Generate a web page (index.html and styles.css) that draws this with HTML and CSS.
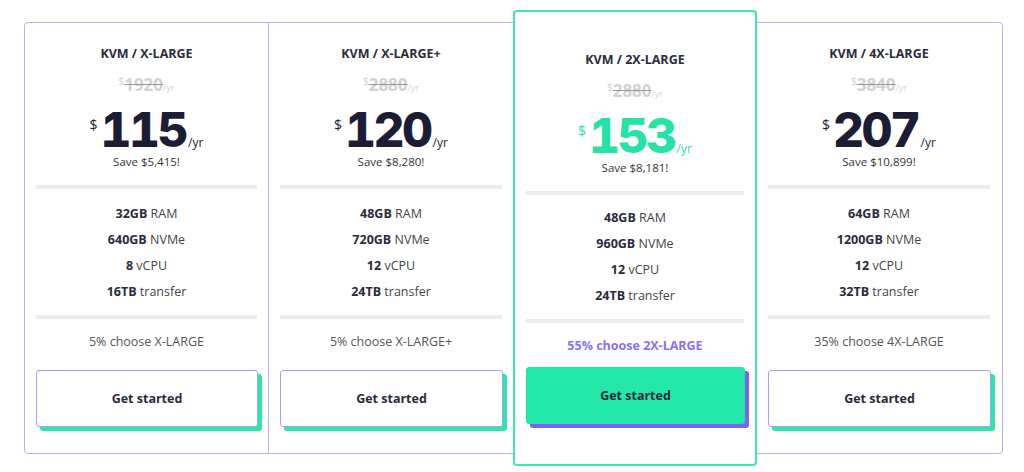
FILE: index.html
```html
<!DOCTYPE html>
<html lang="en">
<head>
  <meta charset="UTF-8">
  <title>KVM plans</title>
  <link rel="stylesheet" href="styles.css">
</head>
<body>

<div class="plans">
  <div class="plan plan-first">
    <h3 class="plan-name">KVM / X-LARGE</h3>
    <div class="old-price"><sup>$</sup><s>1920</s><span>/yr</span></div>
    <div class="price"><sup>$</sup><span class="amount">115</span><span class="per">/yr</span></div>
    <p class="save">Save $5,415!</p>
    <div class="rule"></div>
    <ul class="specs">
      <li><b>32GB</b> RAM</li>
      <li><b>640GB</b> NVMe</li>
      <li><b>8</b> vCPU</li>
      <li><b>16TB</b> transfer</li>
    </ul>
    <div class="rule"></div>
    <p class="choose">5% choose X-LARGE</p>
    <a class="btn" href="#">Get started</a>
  </div>

  <div class="plan">
    <h3 class="plan-name">KVM / X-LARGE+</h3>
    <div class="old-price"><sup>$</sup><s>2880</s><span>/yr</span></div>
    <div class="price"><sup>$</sup><span class="amount">120</span><span class="per">/yr</span></div>
    <p class="save">Save $8,280!</p>
    <div class="rule"></div>
    <ul class="specs">
      <li><b>48GB</b> RAM</li>
      <li><b>720GB</b> NVMe</li>
      <li><b>12</b> vCPU</li>
      <li><b>24TB</b> transfer</li>
    </ul>
    <div class="rule"></div>
    <p class="choose">5% choose X-LARGE+</p>
    <a class="btn" href="#">Get started</a>
  </div>

  <div class="plan plan-featured">
    <h3 class="plan-name">KVM / 2X-LARGE</h3>
    <div class="old-price"><sup>$</sup><s>2880</s><span>/yr</span></div>
    <div class="price"><sup>$</sup><span class="amount">153</span><span class="per">/yr</span></div>
    <p class="save">Save $8,181!</p>
    <div class="rule"></div>
    <ul class="specs">
      <li><b>48GB</b> RAM</li>
      <li><b>960GB</b> NVMe</li>
      <li><b>12</b> vCPU</li>
      <li><b>24TB</b> transfer</li>
    </ul>
    <div class="rule"></div>
    <p class="choose">55% choose 2X-LARGE</p>
    <a class="btn" href="#">Get started</a>
  </div>

  <div class="plan">
    <h3 class="plan-name">KVM / 4X-LARGE</h3>
    <div class="old-price"><sup>$</sup><s>3840</s><span>/yr</span></div>
    <div class="price"><sup>$</sup><span class="amount">207</span><span class="per">/yr</span></div>
    <p class="save">Save $10,899!</p>
    <div class="rule"></div>
    <ul class="specs">
      <li><b>64GB</b> RAM</li>
      <li><b>1200GB</b> NVMe</li>
      <li><b>12</b> vCPU</li>
      <li><b>32TB</b> transfer</li>
    </ul>
    <div class="rule"></div>
    <p class="choose">35% choose 4X-LARGE</p>
    <a class="btn" href="#">Get started</a>
  </div>
</div>

</body>
</html>
```

FILE: styles.css
```css
* {
  box-sizing: border-box;
  margin: 0;
  padding: 0;
}
html, body {
  min-height: 472px;
}
body {
  background: #fff;
  font-family: "Open Sans", "Liberation Sans", sans-serif;
  color: #333;
  padding-top: 22px;
}
.plans {
  display: flex;
  align-items: flex-start;
  width: 979px;
  height: 432px;
  margin-left: 24px;
  border: 1px solid #b9adf7;
  border-radius: 4px;
}
.plan {
  width: 244px;
  height: 430px;
  display: flex;
  flex-direction: column;
  align-items: stretch;
  padding: 22px 0 0;
  text-align: center;
}
.plan-first {
  border-right: 1px solid #b9adf7;
}
.plan-name {
  font-size: 12.5px;
  line-height: 18px;
  font-weight: 700;
  color: #2b2b3c;
}
.old-price {
  margin-top: 8px;
  height: 20px;
  line-height: 20px;
  color: #d2d2d2;
  font-weight: 700;
}
.old-price sup {
  font-size: 10px;
  vertical-align: 6px;
  font-weight: 400;
}
.old-price s {
  font-size: 17px;
  text-decoration-color: #9a9a9a;
}
.old-price span {
  font-size: 9px;
  font-weight: 400;
}
.price {
  margin-top: 10px;
  height: 48px;
  line-height: 48px;
  color: #1c1c34;
}
.price sup {
  font-size: 14px;
  vertical-align: 17px;
  margin-right: 3px;
}
.price .amount {
  font-family: Inter, "Open Sans", sans-serif;
  font-size: 48px;
  font-weight: 800;
  font-variant-numeric: tabular-nums;
  letter-spacing: -2.5px;
}
.price .per {
  font-size: 12px;
  margin-left: 2px;
}
.save {
  margin-top: 5px;
  font-size: 11.5px;
  line-height: 16px;
  color: #333;
}
.rule {
  height: 4px;
  margin: 15px 11px 0 11px;
  background: #ececec;
}
.specs {
  list-style: none;
  margin-top: 12px;
  font-size: 12.5px;
  line-height: 26px;
  color: #444;
}
.specs b {
  color: #2b2b3c;
}
.specs + .rule {
  margin-top: 10px;
}
.choose {
  margin-top: 14px;
  font-size: 12.5px;
  line-height: 18px;
  color: #555;
}
.btn {
  display: flex;
  align-items: center;
  justify-content: center;
  height: 57px;
  margin: 19px 10px 0 11px;
  border: 1px solid #ab9cf5;
  border-radius: 3px;
  background: #fff;
  box-shadow: 4px 4px 0 #2ee6a9;
  font-size: 12.5px;
  font-weight: 700;
  color: #2b2b3c;
  text-decoration: none;
}

/* featured column sits over the frame */
.plan-featured {
  height: 456px;
  margin-top: -13px;
  padding-top: 39px;
  border: 2px solid #3ee8ae;
  border-radius: 4px;
  background: #fff;
}
.plan-featured .price {
  color: #25e3a4;
}
.plan-featured .specs {
  margin-top: 10px;
}
.plan-featured .choose {
  color: #8a70f3;
  font-weight: 700;
}
.plan-featured .btn {
  margin-top: 12px;
  margin-left: 11px;
  border-color: #22e6a8;
  background: #24e8aa;
  box-shadow: 4px 4px 0 #7b62ef;
}
```
